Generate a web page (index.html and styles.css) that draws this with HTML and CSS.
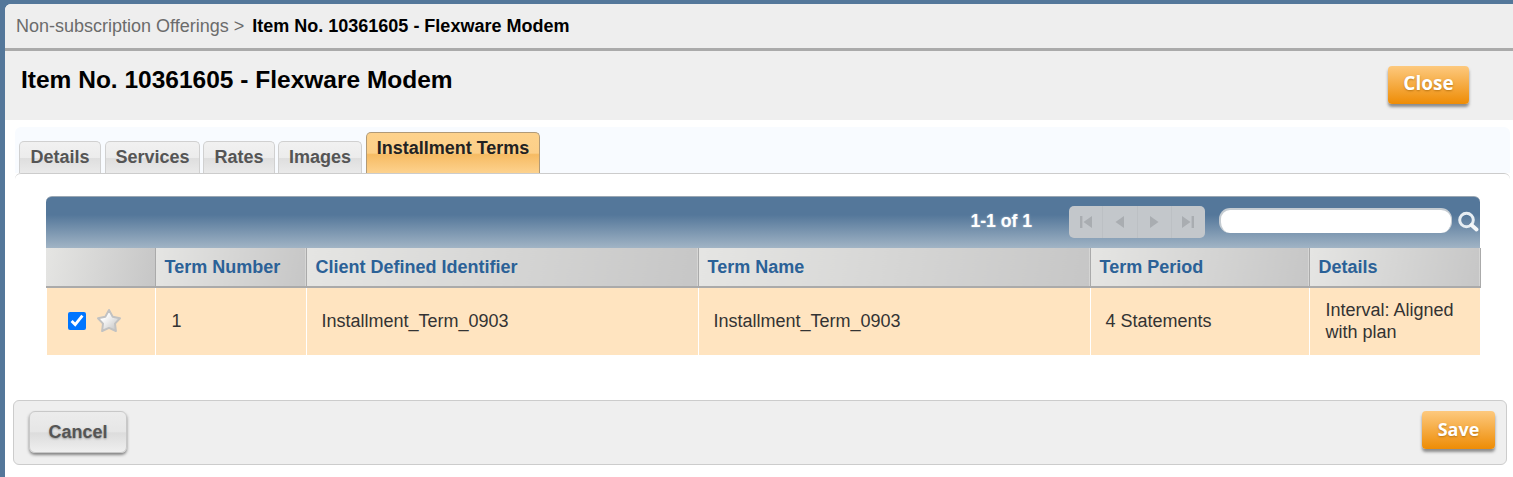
FILE: index.html
```html
<!DOCTYPE html>
<html lang="en">
<head>
    <meta charset="UTF-8">
    <title>Item No. 10361605 - Flexware Modem</title>
    <link rel="stylesheet" href="styles.css">
</head>
<body>
    <div class="panel">
        <div class="breadcrumb">
            <span class="crumb-link">Non-subscription Offerings &gt;</span>
            <span class="crumb-current">Item No. 10361605 - Flexware Modem</span>
        </div>
        <div class="title-bar">
            <h1>Item No. 10361605 - Flexware Modem</h1>
            <button class="btn btn-orange btn-close">Close</button>
        </div>
        <div class="tabs">
            <div class="tab tab-details">Details</div>
            <div class="tab tab-services">Services</div>
            <div class="tab tab-rates">Rates</div>
            <div class="tab tab-images">Images</div>
            <div class="tab tab-active">Installment Terms</div>
        </div>
        <div class="tab-body">
            <div class="grid">
                <div class="toolbar">
                    <span class="count">1-1 of 1</span>
                    <div class="pager">
                        <span class="page-btn">
                            <svg width="14" height="12" viewBox="0 0 14 12"><path d="M1 0h2.4v12H1zM13 0v12L4.500 6z"/></svg>
                        </span>
                        <span class="page-btn">
                            <svg width="14" height="12" viewBox="0 0 14 12"><path d="M11 0v12L2.500 6z"/></svg>
                        </span>
                        <span class="page-btn">
                            <svg width="14" height="12" viewBox="0 0 14 12"><path d="M3 0v12l8.500-6z"/></svg>
                        </span>
                        <span class="page-btn">
                            <svg width="14" height="12" viewBox="0 0 14 12"><path d="M1 0v12l8.500-6zM10.600 0H13v12h-2.400z"/></svg>
                        </span>
                    </div>
                    <div class="search-box"></div>
                    <svg class="search-icon" width="21" height="21" viewBox="0 0 21 21">
                        <circle cx="8.500" cy="9" r="6.800" fill="none" stroke="#e6edf2" stroke-width="3"/>
                        <path d="M13.500 14l5 4.500" stroke="#f4f7f9" stroke-width="3.800" stroke-linecap="round"/>
                    </svg>
                </div>
                <table>
                    <colgroup>
                        <col class="col-select">
                        <col class="col-number">
                        <col class="col-wide">
                        <col class="col-wide">
                        <col class="col-period">
                        <col class="col-details">
                    </colgroup>
                    <thead>
                        <tr>
                            <th></th>
                            <th>Term Number</th>
                            <th>Client Defined Identifier</th>
                            <th>Term Name</th>
                            <th>Term Period</th>
                            <th>Details</th>
                        </tr>
                    </thead>
                    <tbody>
                        <tr>
                            <td class="select-cell">
                                <div class="select-wrap">
                                    <input type="checkbox" checked>
                                    <svg class="star" width="26" height="26" viewBox="0 0 26 26">
                                        <defs>
                                            <linearGradient id="starFill" x1="0" y1="0" x2="1" y2="1">
                                                <stop offset="0.300" stop-color="#ffffff"/>
                                                <stop offset="0.850" stop-color="#cacaca"/>
                                            </linearGradient>
                                        </defs>
                                        <path d="M13 2l3.700 6.700 7.300 1.500-5 5.400.9 7.400-6.900-3.100-6.900 3.100.9-7.400-5-5.400 7.300-1.500z" fill="url(#starFill)" stroke="#c2c2c2" stroke-width="2" stroke-linejoin="round"/>
                                    </svg>
                                </div>
                            </td>
                            <td class="cell-inset">1</td>
                            <td>Installment_Term_0903</td>
                            <td>Installment_Term_0903</td>
                            <td>4 Statements</td>
                            <td class="cell-inset">Interval: Aligned with plan</td>
                        </tr>
                    </tbody>
                </table>
            </div>
        </div>
        <div class="footer">
            <button class="btn btn-grey">Cancel</button>
            <button class="btn btn-orange btn-save">Save</button>
        </div>
    </div>
</body>
</html>
```

FILE: styles.css
```css
html, body {
    height: 100%;
}
body {
    margin: 0;
    padding: 4px 0 0 5px;
    box-sizing: border-box;
    background-color: #54779a;
    font-family: "Liberation Sans", Arial, sans-serif;
    overflow: hidden;
}
.panel {
    height: 100%;
    background-color: #fff;
    border-top-left-radius: 6px;
    overflow: hidden;
}
.breadcrumb {
    height: 44px;
    padding-left: 11px;
    display: flex;
    align-items: center;
    gap: 8px;
    background-color: #eee;
    border-bottom: 3px solid #aaa;
    font-size: 18px;
}
.crumb-link {
    color: #6b6b6b;
}
.crumb-current {
    font-weight: bold;
    color: #000;
}
.title-bar {
    height: 69px;
    display: flex;
    justify-content: space-between;
    background-color: #efefef;
}
h1 {
    margin: 14px 0 0 16px;
    font-size: 24.500px;
    line-height: 30px;
    color: #000;
}
.btn {
    border: 0;
    padding: 0;
    font-weight: bold;
    cursor: pointer;
}
.btn-orange {
    font-family: "Open Sans", sans-serif;
    color: #fff;
    border-radius: 4px;
    background: linear-gradient(#fdc97e, #ee8c05);
    box-shadow: 0 3px 3px rgba(60, 60, 60, 0.55);
    text-shadow: 0 1px 2px rgba(150, 90, 0, 0.6);
}
.btn-close {
    width: 81px;
    height: 38px;
    margin: 15px 44px 0 0;
    padding-bottom: 5px;
    font-size: 19px;
}
.btn-save {
    width: 73px;
    height: 38px;
    margin-left: auto;
    padding-bottom: 2px;
    font-size: 18px;
}
.btn-grey {
    width: 98px;
    height: 42px;
    font-family: "Liberation Sans", Arial, sans-serif;
    font-size: 18px;
    color: #555;
    border: 1px solid #c8c8c8;
    border-radius: 6px;
    background: linear-gradient(#ececec 0%, #e6e6e6 50%, #dcdcdc 52%, #efefef 100%);
    box-shadow: 0 2px 3px rgba(60, 60, 60, 0.6);
    text-shadow: 0 1px 2px rgba(90, 90, 90, 0.5);
}
.tabs {
    height: 46px;
    margin: 7px 3px 0 10px;
    padding-left: 3px;
    box-sizing: border-box;
    display: flex;
    align-items: flex-end;
    gap: 4px;
    background-color: #f8fbff;
    border-radius: 6px 6px 0 0;
}
.tab {
    height: 32px;
    box-sizing: border-box;
    padding-top: 5px;
    text-align: center;
    font-size: 18px;
    font-weight: bold;
    color: #555;
    border: 1px solid #d0d0d0;
    border-bottom: 0;
    border-radius: 5px 5px 0 0;
    background: linear-gradient(#f1f1f1 0%, #ececec 50%, #dedede 52%, #eaeaea 100%);
}
.tab-details {
    width: 82px;
    margin-left: 1px;
}
.tab-services {
    width: 95px;
}
.tab-rates {
    width: 72px;
    margin-left: -1px;
}
.tab-images {
    width: 84px;
    margin-left: -1px;
}
.tab-active {
    width: 174px;
    height: 41px;
    color: #222;
    border-color: #b09a78;
    background: linear-gradient(#fdd28c 0%, #fccf88 50%, #f6bb63 54%, #fdd28e 100%);
}
.tab-body {
    height: 227px;
    margin: 0 3px 0 10px;
    padding: 22px 0 0 31px;
    box-sizing: border-box;
    border-top: 1px solid #ccc;
    border-radius: 6px 6px 0 0;
}
.grid {
    width: 1434px;
}
.toolbar {
    height: 52px;
    box-sizing: border-box;
    padding: 9px 1px 0 0;
    display: flex;
    align-items: flex-start;
    background: linear-gradient(#54779a 0%, #54779a 35%, #a1b4c5 100%);
    border-top: 1px solid #9aa7b3;
    border-radius: 6px 6px 0 0;
}
.count {
    margin: 5px 37px 0 auto;
    font-size: 17.600px;
    font-weight: bold;
    color: #fff;
    text-shadow: 0 0 2px rgba(255, 255, 255, 0.5);
}
.pager {
    width: 136px;
    height: 32px;
    display: flex;
    background-color: #c3c7cb;
    border-radius: 5px;
}
.page-btn {
    flex: 1;
    display: flex;
    align-items: center;
    justify-content: center;
    border-left: 1px solid #bcc0c4;
}
.page-btn:first-child {
    border-left: 0;
}
.page-btn svg {
    fill: #a9adb1;
}
.search-box {
    width: 233px;
    height: 25px;
    box-sizing: border-box;
    margin: 2px 6px 0 14px;
    background-color: #fff;
    border-radius: 11px;
    border: 2px solid #c5ccd2;
    border-bottom-width: 0;
    border-right-width: 1px;
}
.search-icon {
    margin-top: 5px;
}
table {
    width: 1434px;
    border-collapse: collapse;
    table-layout: fixed;
}
.col-select {
    width: 109px;
}
.col-number {
    width: 151px;
}
.col-wide {
    width: 392px;
}
.col-period {
    width: 219px;
}
.col-details {
    width: 171px;
}
th {
    height: 39px;
    box-sizing: border-box;
    padding: 0 0 0 9px;
    text-align: left;
    font-size: 18px;
    color: #2b6197;
    background: linear-gradient(100deg, #e5e5e3, #c6c6c6);
    border-left: 1px solid #aaa;
    border-right: 1px solid #aaa;
    border-bottom: 2px solid #aaa;
}
th:first-child {
    border-left: 0;
}
td {
    height: 68px;
    box-sizing: border-box;
    padding: 0 14px 2px 15px;
    font-size: 18px;
    line-height: 22px;
    color: #333;
    background-color: #ffe4c0;
    border-left: 1px solid #fff;
}
td:first-child {
    border-left: 0;
    box-shadow: inset 1px 0 0 #fff;
}
td.cell-inset {
    padding-left: 16px;
}
.select-cell {
    padding: 0 0 2px 22px;
}
.select-wrap {
    display: flex;
    align-items: center;
    gap: 10px;
}
input[type="checkbox"] {
    width: 18px;
    height: 18px;
    margin: 0;
    accent-color: #0075ff;
}
.star {
    margin-top: 1px;
}
.footer {
    height: 65px;
    box-sizing: border-box;
    margin: 0 6px 0 8px;
    padding: 10px 11px 0 15px;
    display: flex;
    justify-content: space-between;
    align-items: flex-start;
    background-color: #efefef;
    border: 1px solid #ccc;
    border-radius: 6px;
}
```
